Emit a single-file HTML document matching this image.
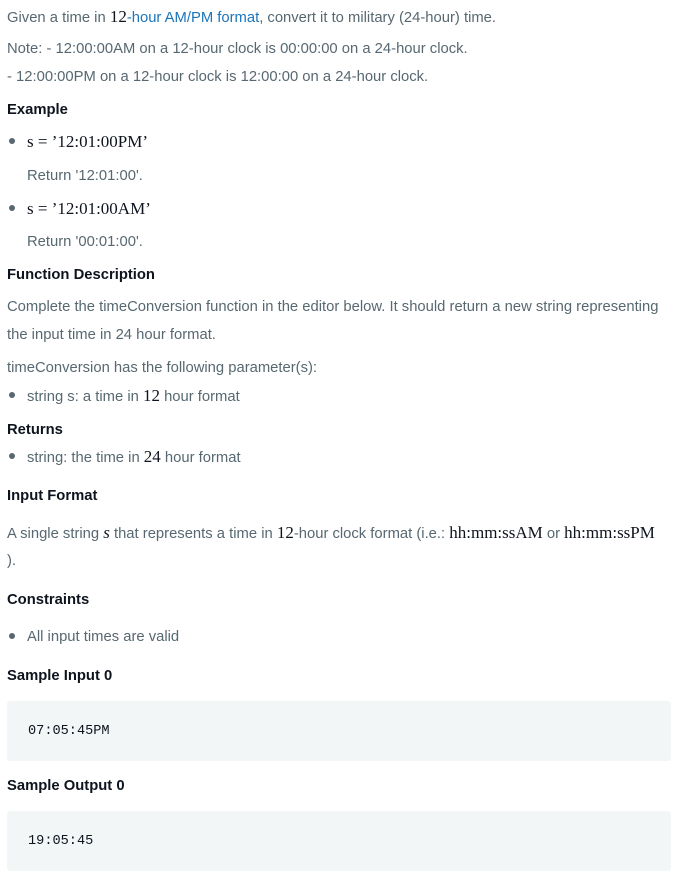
<!DOCTYPE html>
<html><head><style>
body{margin:0;width:684px;height:886px;background:#fff;font-family:"Liberation Sans",sans-serif;font-size:14.8px;color:#576871;position:relative;overflow:hidden}
.l{position:absolute;left:7px;white-space:nowrap;line-height:20px;margin-top:1px}
.h{color:#0e141e;font-weight:bold;font-size:14.8px}
.m{font-family:"Liberation Serif",serif;font-size:17px;color:#0e141e}
.b{position:absolute;left:9px;width:6px;height:6px;border-radius:50%;background:#576871}
a{color:#1b75bb;text-decoration:none}
.box{position:absolute;left:7px;width:664px;height:60px;background:#f3f6f7;border-radius:3px}
.code{position:absolute;left:28px;font-family:"Liberation Mono",monospace;font-size:13.6px;color:#0e141e;line-height:20px;margin-top:1px}
</style></head><body>
<div class="l" style="top:6px">Given a time in <span class="m">12</span><a>-hour AM/PM format</a>, convert it to military (24-hour) time.</div>
<div class="l" style="top:38px">Note: - 12:00:00AM on a 12-hour clock is 00:00:00 on a 24-hour clock.</div>
<div class="l" style="top:66px">- 12:00:00PM on a 12-hour clock is 12:00:00 on a 24-hour clock.</div>
<div class="l h" style="top:99px">Example</div>
<div class="b" style="top:138px"></div>
<div class="l m" style="left:27px;top:131px">s = ’12:01:00PM’</div>
<div class="l" style="left:27px;top:165px">Return '12:01:00'.</div>
<div class="b" style="top:205px"></div>
<div class="l m" style="left:27px;top:198px">s = ’12:01:00AM’</div>
<div class="l" style="left:27px;top:231px">Return '00:01:00'.</div>
<div class="l h" style="top:264px">Function Description</div>
<div class="l" style="top:296px">Complete the timeConversion function in the editor below. It should return a new string representing</div>
<div class="l" style="top:324px">the input time in 24 hour format.</div>
<div class="l" style="top:357px">timeConversion has the following parameter(s):</div>
<div class="b" style="top:392px"></div>
<div class="l" style="left:27px;top:385px">string s: a time in <span class="m">12</span> hour format</div>
<div class="l h" style="top:419px">Returns</div>
<div class="b" style="top:453px"></div>
<div class="l" style="left:27px;top:446px">string: the time in <span class="m">24</span> hour format</div>
<div class="l h" style="top:485px">Input Format</div>
<div class="l" style="top:522px">A single string <span class="m"><i>s</i></span> that represents a time in <span class="m">12</span>-hour clock format (i.e.: <span class="m">hh:mm:ssAM</span> or <span class="m">hh:mm:ssPM</span></div>
<div class="l" style="top:550px">).</div>
<div class="l h" style="top:589px">Constraints</div>
<div class="b" style="top:633px"></div>
<div class="l" style="left:27px;top:626px">All input times are valid</div>
<div class="l h" style="top:665px">Sample Input 0</div>
<div class="box" style="top:701px"></div>
<div class="code" style="top:721px">07:05:45PM</div>
<div class="l h" style="top:775px">Sample Output 0</div>
<div class="box" style="top:811px"></div>
<div class="code" style="top:831px">19:05:45</div>
</body></html>
